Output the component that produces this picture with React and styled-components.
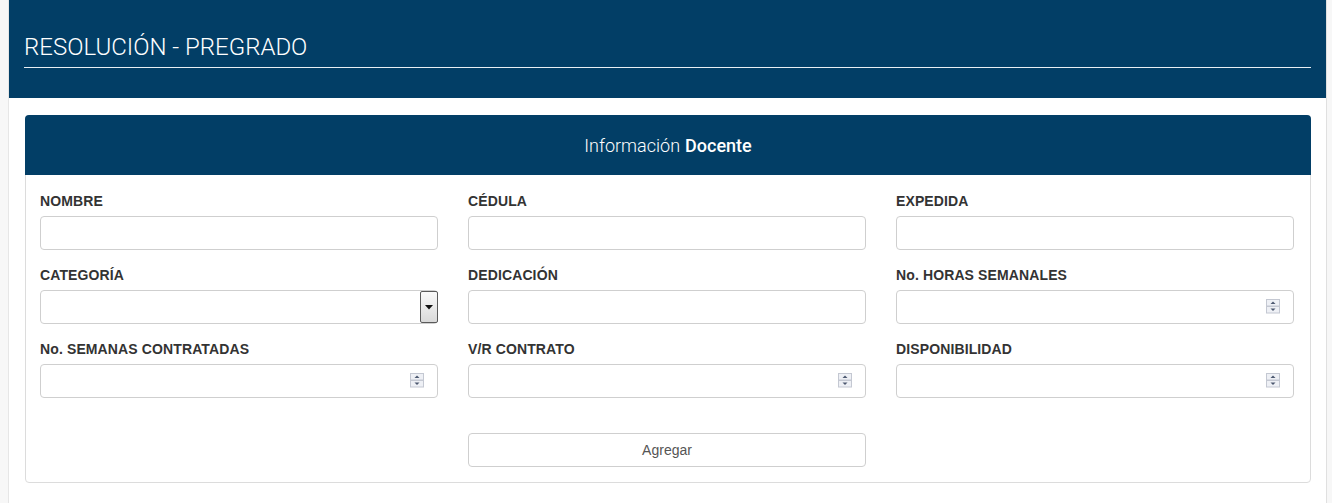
import React from "react";
import styled, { createGlobalStyle } from "styled-components";

const GlobalStyle = createGlobalStyle`
  html, body {
    margin: 0;
    padding: 0;
    background-color: #f7f7f7;
  }
  * {
    box-sizing: border-box;
  }
`;

const fields = [
  { label: "NOMBRE", type: "text" },
  { label: "CÉDULA", type: "text" },
  { label: "EXPEDIDA", type: "text" },
  { label: "CATEGORÍA", type: "select" },
  { label: "DEDICACIÓN", type: "text" },
  { label: "No. HORAS SEMANALES", type: "number" },
  { label: "No. SEMANAS CONTRATADAS", type: "number" },
  { label: "V/R CONTRATO", type: "number" },
  { label: "DISPONIBILIDAD", type: "number" },
];

const Spinner = () => (
  <StSpinner>
    <svg width="14" height="15" viewBox="0 0 14 15">
      <rect x="0.5" y="0.5" width="13" height="6.5" fill="#eef0f5" stroke="#c4c8d2" />
      <rect x="0.5" y="7.5" width="13" height="6.5" fill="#eef0f5" stroke="#c4c8d2" />
      <path d="M4.5 5 L7 2.5 L9.5 5 Z" fill="#4c5870" />
      <path d="M4.5 9.5 L7 12 L9.5 9.5 Z" fill="#4c5870" />
    </svg>
  </StSpinner>
);

const App = () => {
  return (
    <>
      <GlobalStyle />
      <StPage>
        <StHeader>
          <h1>RESOLUCIÓN - PREGRADO</h1>
        </StHeader>

        <StContent>
          <StCard>
            <StCardHeader>
              Información <b>Docente</b>
            </StCardHeader>
            <StCardBody>
              <StGrid>
                {fields.map((f) => (
                  <StField key={f.label}>
                    <StLabel>{f.label}</StLabel>
                    <StInputBox>
                      {f.type === "select" && (
                        <StSelectArrow>
                          <svg width="8" height="5" viewBox="0 0 8 5">
                            <path d="M0 0 L8 0 L4 4.5 Z" fill="#111" />
                          </svg>
                        </StSelectArrow>
                      )}
                      {f.type === "number" && <Spinner />}
                    </StInputBox>
                  </StField>
                ))}
              </StGrid>
              <StActions>
                <span />
                <StButton>Agregar</StButton>
              </StActions>
            </StCardBody>
          </StCard>
        </StContent>
      </StPage>
    </>
  );
};

const StPage = styled.div`
  margin: 0 5px 0 8px;
  min-height: 503px;
  background-color: #fff;
  border-left: 1px solid #e6e6e6;
  border-right: 1px solid #e0e0e0;
`;

const StHeader = styled.div`
  background-color: #023e66;
  height: 98px;
  padding: 32px 15px 0 15px;

  h1 {
    margin: 0;
    font-family: Roboto, "Liberation Sans", sans-serif;
    font-weight: 300;
    font-size: 24px;
    line-height: 30px;
    color: #fff;
    padding-bottom: 5px;
    border-bottom: 1px solid #e8eef3;
  }
`;

const StContent = styled.div`
  padding: 17px 15px 20px 16px;
`;

const StCard = styled.div`
  border: 1px solid #dcdcdc;
  border-radius: 4px;
  background-color: #fff;
`;

const StCardHeader = styled.div`
  height: 60px;
  margin: -1px -1px 0 -1px;
  background-color: #023e66;
  border-radius: 4px 4px 0 0;
  color: #fff;
  display: flex;
  justify-content: center;
  align-items: center;
  gap: 5px;
  font-family: Roboto, "Liberation Sans", sans-serif;
  font-weight: 300;
  font-size: 18px;

  b {
    font-weight: 500;
  }
`;

const StCardBody = styled.div`
  padding: 16px 16px 15px 14px;
`;

const StGrid = styled.div`
  display: grid;
  grid-template-columns: repeat(3, 1fr);
  column-gap: 30px;
  row-gap: 15px;
`;

const StField = styled.div`
  display: flex;
  flex-direction: column;
`;

const StLabel = styled.label`
  font-family: "Liberation Sans", Arial, sans-serif;
  font-weight: 700;
  font-size: 14px;
  line-height: 20px;
  letter-spacing: 0.12px;
  color: #333;
  margin-bottom: 5px;
`;

const StInputBox = styled.div`
  position: relative;
  height: 34px;
  border: 1px solid #cfcfcf;
  border-radius: 4px;
  background-color: #fff;
`;

const StSelectArrow = styled.div`
  position: absolute;
  right: -1px;
  top: 0;
  width: 18px;
  height: 32px;
  border: 1px solid #5a5a5a;
  border-radius: 2px;
  background: linear-gradient(#fafafa, #d9d9d9);
  display: flex;
  align-items: center;
  justify-content: center;
`;

const StSpinner = styled.div`
  position: absolute;
  right: 13px;
  top: 8px;
  display: flex;
`;

const StActions = styled.div`
  display: grid;
  grid-template-columns: repeat(3, 1fr);
  column-gap: 30px;
  margin-top: 35px;
`;

const StButton = styled.button`
  height: 34px;
  border: 1px solid #cfcfcf;
  border-radius: 4px;
  background-color: #fff;
  font-family: "Liberation Sans", Arial, sans-serif;
  font-size: 14px;
  color: #555;
  cursor: pointer;
`;

export default App;
